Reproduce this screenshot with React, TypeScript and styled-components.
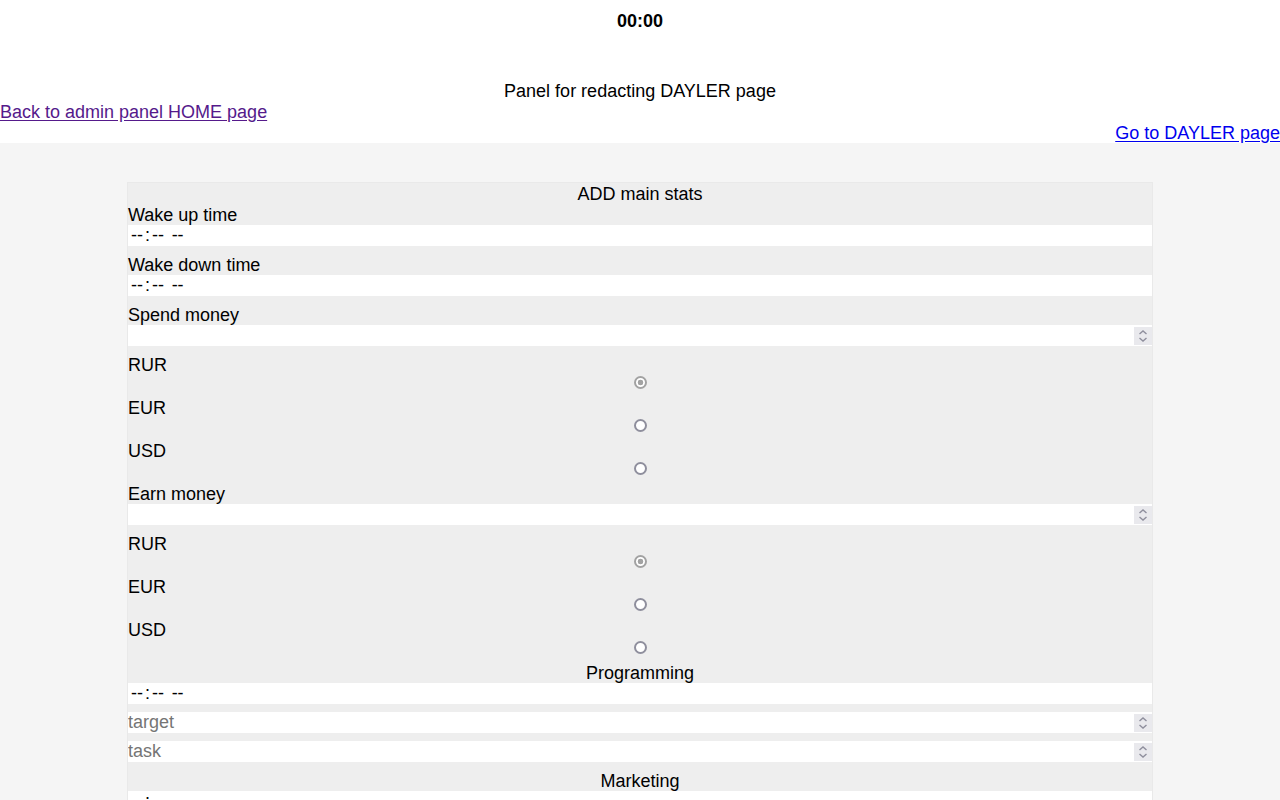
import React from "react";
import styled, { createGlobalStyle } from "styled-components";

const GlobalStyle = createGlobalStyle`
  html, body {
    margin: 0;
    padding: 0;
    background: #ffffff;
  }
  body {
    font-family: "Liberation Sans", Arial, sans-serif;
    font-size: 18px;
    line-height: 21px;
    color: #000000;
  }
  * { box-sizing: border-box; }
`;

const Page = styled.div`
  display: flex;
  flex-direction: column;
  min-height: 100vh;
`;

const Header = styled.header`
  display: flex;
  flex-direction: column;
  padding: 10px 0 0;
  background: #ffffff;
`;

const Timer = styled.div`
  text-align: center;
  font-weight: 700;
  height: 21px;
  line-height: 23px;
  margin-bottom: 49px;
`;

const Title = styled.div`
  text-align: center;
  height: 21px;
  line-height: 23px;
`;

const NavLink = styled.a<{ $visited?: boolean; $right?: boolean }>`
  display: block;
  height: 21px;
  line-height: 23px;
  color: ${(p) => (p.$visited ? "#551a8b" : "#0000ee")};
  text-decoration: underline;
  text-underline-offset: 2px;
  align-self: ${(p) => (p.$right ? "flex-end" : "flex-start")};
`;

const Main = styled.main`
  flex: 1;
  background: #f5f5f5;
  padding: 40px 0 40px;
`;

const Form = styled.form`
  width: 80%;
  margin: 0 auto;
  background: #eeeeee;
  box-shadow: 0 0 0 1px #e9e9e9;
  display: flex;
  flex-direction: column;
`;

const SectionTitle = styled.div`
  text-align: center;
  height: 21px;
  line-height: 23px;
`;

const FieldLabel = styled.label`
  display: block;
  height: 21px;
  line-height: 23px;
`;

const TimeInput = styled.input`
  display: block;
  width: 100%;
  height: 21px;
  margin: 0 0 8px;
  padding: 0 0 0 2px;
  border: none;
  outline: none;
  background: #ffffff;
  font: inherit;
  line-height: 21px;
  color: #000000;
  &::-webkit-calendar-picker-indicator {
    display: none;
  }
  &::-webkit-datetime-edit {
    padding: 0;
  }
  &::-webkit-datetime-edit-fields-wrapper {
    padding: 0;
  }
  &::-webkit-datetime-edit-text {
    padding: 0 1px;
  }
`;

const NumberRow = styled.div`
  display: flex;
  align-items: center;
  height: 21px;
  margin: 0 0 8px;
  background: #ffffff;
`;

const NumberInput = styled.input`
  flex: 1;
  min-width: 0;
  height: 21px;
  padding: 0;
  border: none;
  outline: none;
  background: transparent;
  font: inherit;
  line-height: 21px;
  color: #000000;
  appearance: textfield;
  -moz-appearance: textfield;
  &::-webkit-inner-spin-button,
  &::-webkit-outer-spin-button {
    -webkit-appearance: none;
    margin: 0;
  }
  &::placeholder {
    color: #757575;
    opacity: 1;
  }
`;

const Spinner = styled.span`
  display: flex;
  flex: none;
  width: 18px;
  height: 18px;
  background: #e9e9ed;
`;

const RadioRow = styled.div`
  display: flex;
  justify-content: center;
  align-items: flex-start;
  height: 22px;
  padding-top: 1px;
`;

const Radio = styled.input`
  appearance: none;
  -webkit-appearance: none;
  width: 13px;
  height: 13px;
  margin: 0;
  border-radius: 50%;
  border: 2px solid #8f8f9d;
  background: #ffffff;
  &:checked {
    border-color: #a2a2a2;
    background: radial-gradient(circle, #a2a2a2 0 2.6px, #ffffff 3.1px);
  }
`;

const SpinIcon = () => (
  <Spinner aria-hidden="true">
    <svg width="18" height="18" viewBox="0 0 18 18" fill="none">
      <path d="M5.5 7 L9 4 L12.5 7" stroke="#8f8f9d" strokeWidth="1.4" />
      <path d="M5.5 11 L9 14 L12.5 11" stroke="#8f8f9d" strokeWidth="1.4" />
    </svg>
  </Spinner>
);

const NumberField: React.FC<{ id: string; placeholder?: string }> = ({ id, placeholder }) => (
  <NumberRow>
    <NumberInput id={id} type="number" placeholder={placeholder} />
    <SpinIcon />
  </NumberRow>
);

const currencies = ["RUR", "EUR", "USD"];

const CurrencyGroup: React.FC<{ name: string }> = ({ name }) => (
  <>
    {currencies.map((c, i) => (
      <React.Fragment key={c}>
        <FieldLabel htmlFor={`${name}-${c}`}>{c}</FieldLabel>
        <RadioRow>
          <Radio type="radio" id={`${name}-${c}`} name={name} value={c} defaultChecked={i === 0} />
        </RadioRow>
      </React.Fragment>
    ))}
  </>
);

const Activity: React.FC<{ title: string; id: string }> = ({ title, id }) => (
  <>
    <SectionTitle>{title}</SectionTitle>
    <TimeInput type="time" id={`${id}-time`} />
    <NumberField id={`${id}-target`} placeholder="target" />
    <NumberField id={`${id}-task`} placeholder="task" />
  </>
);

export default function App() {
  return (
    <>
      <GlobalStyle />
      <Page>
        <Header>
          <Timer>00:00</Timer>
          <Title>Panel for redacting DAYLER page</Title>
          <NavLink href="#" $visited>
            Back to admin panel HOME page
          </NavLink>
          <NavLink href="#" $right>
            Go to DAYLER page
          </NavLink>
        </Header>
        <Main>
          <Form onSubmit={(e) => e.preventDefault()}>
            <SectionTitle>ADD main stats</SectionTitle>
            <FieldLabel htmlFor="wake-up">Wake up time</FieldLabel>
            <TimeInput type="time" id="wake-up" />
            <FieldLabel htmlFor="wake-down">Wake down time</FieldLabel>
            <TimeInput type="time" id="wake-down" />
            <FieldLabel htmlFor="spend">Spend money</FieldLabel>
            <NumberField id="spend" />
            <CurrencyGroup name="spend-currency" />
            <FieldLabel htmlFor="earn">Earn money</FieldLabel>
            <NumberField id="earn" />
            <CurrencyGroup name="earn-currency" />
            <Activity title="Programming" id="programming" />
            <Activity title="Marketing" id="marketing" />
          </Form>
        </Main>
      </Page>
    </>
  );
}
